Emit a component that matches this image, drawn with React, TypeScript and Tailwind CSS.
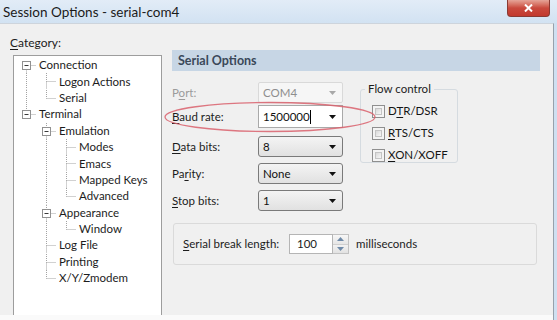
import React from "react";

type Row = { label: string; level: number; box?: boolean; first?: boolean; last?: boolean; guides: boolean[] };

const rows: Row[] = [
  { label: "Connection", level: 0, box: true, first: true, guides: [] },
  { label: "Logon Actions", level: 1, guides: [true] },
  { label: "Serial", level: 1, last: true, guides: [true] },
  { label: "Terminal", level: 0, box: true, last: true, guides: [] },
  { label: "Emulation", level: 1, box: true, guides: [false] },
  { label: "Modes", level: 2, guides: [false, true] },
  { label: "Emacs", level: 2, guides: [false, true] },
  { label: "Mapped Keys", level: 2, guides: [false, true] },
  { label: "Advanced", level: 2, last: true, guides: [false, true] },
  { label: "Appearance", level: 1, box: true, guides: [false] },
  { label: "Window", level: 2, last: true, guides: [false, true] },
  { label: "Log File", level: 1, guides: [false] },
  { label: "Printing", level: 1, guides: [false] },
  { label: "X/Y/Zmodem", level: 1, last: true, guides: [false] },
];

const H = 16.4;
const DOT = "#a3a3a3";

function Connector({ row }: { row: Row }) {
  const w = 20 * (row.level + 1);
  const cx = 20 * row.level + 10.5;
  const cy = 8.5;
  return (
    <svg width={w} height={H} className="shrink-0 block">
      {row.guides.map((g, i) =>
        g ? <line key={i} x1={20 * i + 10.5} y1={0} x2={20 * i + 10.5} y2={H} stroke={DOT} strokeDasharray="1 1" /> : null
      )}
      {!(row.first && row.level === 0) && (
        <line x1={cx} y1={0} x2={cx} y2={cy} stroke={DOT} strokeDasharray="1 1" />
      )}
      {!row.last && <line x1={cx} y1={cy} x2={cx} y2={H} stroke={DOT} strokeDasharray="1 1" />}
      <line x1={cx} y1={cy} x2={w} y2={cy} stroke={DOT} strokeDasharray="1 1" />
      {row.box && (
        <g>
          <rect x={cx - 4} y={cy - 4} width={8} height={8} fill="#fff" stroke="#919191" />
          <line x1={cx - 2} y1={cy} x2={cx + 2} y2={cy} stroke="#3a3a3a" />
        </g>
      )}
    </svg>
  );
}

function Arrow({ color = "#111" }: { color?: string }) {
  return (
    <svg width="7" height="4" viewBox="0 0 7 4" className="block">
      <path d="M0 0 H7 L3.5 4 Z" fill={color} />
    </svg>
  );
}

function Combo({ value, variant }: { value: string; variant: "disabled" | "edit" | "normal" }) {
  if (variant === "disabled") {
    return (
      <div className="w-[85px] h-full border border-[#d9d9d9] bg-[#f6f6f6] rounded-[2px] flex items-center">
        <span className="pl-[4px] flex-1 text-[#8e8e8e]">{value}</span>
        <div className="pr-[6px]"><Arrow color="#a8a8a8" /></div>
      </div>
    );
  }
  if (variant === "edit") {
    return (
      <div className="w-[85px] h-full border border-[#a9a9a9] bg-white flex items-center">
        <span className="pl-[4px] text-[#111]">{value}</span>
        <span className="w-px h-[14px] bg-black" />
        <div className="flex-1" />
        <div className="pr-[6px]"><Arrow /></div>
      </div>
    );
  }
  return (
    <div className="w-[85px] h-full border border-[#7a7a7a] rounded-[3px] bg-gradient-to-b from-[#f4f4f4] to-[#e1e1e1] flex items-center">
      <span className="pl-[4px] flex-1 text-[#111]">{value}</span>
      <div className="pr-[6px]"><Arrow /></div>
    </div>
  );
}

function U({ children }: { children: React.ReactNode }) {
  return <span className="underline underline-offset-[2px] decoration-1">{children}</span>;
}

function Check({ children }: { children: React.ReactNode }) {
  return (
    <div className="flex items-center h-[22px]">
      <div className="w-[13px] h-[13px] border border-[#8f8f8f] bg-[#f4f4f4] p-[2px]">
        <div className="w-full h-full border border-[#c4c4c4] bg-gradient-to-br from-[#d9d9d9] to-[#f7f7f7]" />
      </div>
      <span className="pl-[3px] text-[#151515]">{children}</span>
    </div>
  );
}

function FormRow({ label, children, className }: { label: React.ReactNode; children: React.ReactNode; className: string }) {
  return (
    <div className={"flex items-center " + className}>
      <div className="w-[86px]">{label}</div>
      <div className="h-full">{children}</div>
    </div>
  );
}

export default function App() {
  return (
    <div className="w-[557px] h-[320px] overflow-hidden relative bg-[#f0f0f0] font-['Lato','Noto_Sans',sans-serif] text-[11.5px] leading-[16px] text-[#1c1c1c] flex flex-col">
      {/* title bar */}
      <div className="h-[23px] shrink-0 bg-gradient-to-b from-[#e2ecf7] to-[#d2e2f2] flex items-start relative">
        <span className="pl-[3px] pt-[2px] text-[13.5px] leading-[20px] text-[#1a1a1a]">Session Options - serial-com4</span>
        <div className="absolute left-[507px] top-0 w-[43px] h-[17px] rounded-b-[4px] border border-t-0 border-[#8a3a33] bg-gradient-to-b from-[#e5a498] via-[#c9493d] to-[#c2392e] flex items-center justify-center">
          <svg width="9" height="8" viewBox="0 0 9 8">
            <path d="M1 0.5 L8 7.5 M8 0.5 L1 7.5" stroke="#fff" strokeWidth="2" />
          </svg>
        </div>
      </div>

      <div className="flex-1 flex min-h-0">
        <div className="flex-1 flex flex-col border-t border-[#cdd4dc] border-r border-r-[#97a1ab] min-h-0">
          <div className="flex-1 flex min-h-0">
            {/* left column */}
            <div className="pl-[13px] pt-[11px] w-[162px] flex flex-col">
              <div className="h-[16px] -ml-[3px] text-[12px]"><U>C</U>ategory:</div>
              <div className="mt-[4px] flex-1 border border-[#9d9d9d] border-b-0 bg-white pt-[1px] pl-[2px]">
                {rows.map((r) => (
                  <div key={r.label} className="flex items-center" style={{ height: H }}>
                    <Connector row={r} />
                    <span className="pl-[3px] whitespace-nowrap leading-[16px]">{r.label}</span>
                  </div>
                ))}
              </div>
            </div>

            {/* right panel */}
            <div className="ml-[10px] pt-[26px] flex flex-col">
              <div className="w-[368px] h-[21px] bg-[#c7d6e5] pl-[6px] flex items-center font-bold text-[12.5px] text-[#3a4859]">
                Serial Options
              </div>
              <div className="flex">
                <div className="w-[171px] flex flex-col">
                  <FormRow className="h-[21px] mt-[11px]" label={<span className="text-[#9b9b9b]">P<U>o</U>rt:</span>}>
                    <Combo value="COM4" variant="disabled" />
                  </FormRow>
                  <FormRow className="h-[23px] mt-[2px]" label={<span><U>B</U>aud rate:</span>}>
                    <Combo value="1500000" variant="edit" />
                  </FormRow>
                  <FormRow className="h-[21px] mt-[8px]" label={<span><U>D</U>ata bits:</span>}>
                    <Combo value="8" variant="normal" />
                  </FormRow>
                  <FormRow className="h-[21px] mt-[6px]" label={<span>Pa<U>r</U>ity:</span>}>
                    <Combo value="None" variant="normal" />
                  </FormRow>
                  <FormRow className="h-[21px] mt-[6px]" label={<span><U>S</U>top bits:</span>}>
                    <Combo value="1" variant="normal" />
                  </FormRow>
                </div>
                <fieldset className="ml-[17px] mt-[10px] w-[98px] h-[82px] border border-[#d5dbe0] rounded-[3px] pl-[11px] pt-[3px]">
                  <legend className="-ml-[7px] px-[3px] text-[#1c1c1c]">Flow control</legend>
                  <Check>D<U>T</U>R/DSR</Check>
                  <Check><U>R</U>TS/CTS</Check>
                  <Check><U>X</U>ON/XOFF</Check>
                </fieldset>
              </div>
              <div className="mt-[12px] ml-[1px] w-[364px] h-[42px] border border-[#dadada] rounded-[3px] flex items-center pl-[9px]">
                <span className="w-[106px]"><U>S</U>erial break length:</span>
                <div className="w-[44px] h-[20px] border border-[#b5b5b5] bg-white flex items-center pl-[7px]">100</div>
                <div className="w-[16px] h-[20px] flex flex-col border border-l-0 border-[#c2c2c2]">
                  <div className="flex-1 bg-gradient-to-b from-[#f7f7f7] to-[#e6e6e6] border-b border-[#cfcfcf] flex items-center justify-center">
                    <svg width="7" height="4" viewBox="0 0 7 4"><path d="M0 4 H7 L3.5 0 Z" fill="#6f8aa8" /></svg>
                  </div>
                  <div className="flex-1 bg-gradient-to-b from-[#f2f2f2] to-[#e2e2e2] flex items-center justify-center">
                    <svg width="7" height="4" viewBox="0 0 7 4"><path d="M0 0 H7 L3.5 4 Z" fill="#6f8aa8" /></svg>
                  </div>
                </div>
                <span className="pl-[7px]">milliseconds</span>
              </div>
            </div>
          </div>
          <div className="h-[5px] shrink-0 bg-[#fafafa]" />
        </div>
        <div className="w-[3px] bg-[#cfe0f1] shrink-0" />
      </div>

      {/* red annotation ellipse */}
      <svg className="absolute left-[160px] top-[98px] pointer-events-none" width="222" height="38" viewBox="0 0 222 38">
        <ellipse cx="110" cy="19" rx="105" ry="14.5" fill="none" stroke="#d9606c" strokeWidth="1.3" opacity="0.85" />
      </svg>
    </div>
  );
}
